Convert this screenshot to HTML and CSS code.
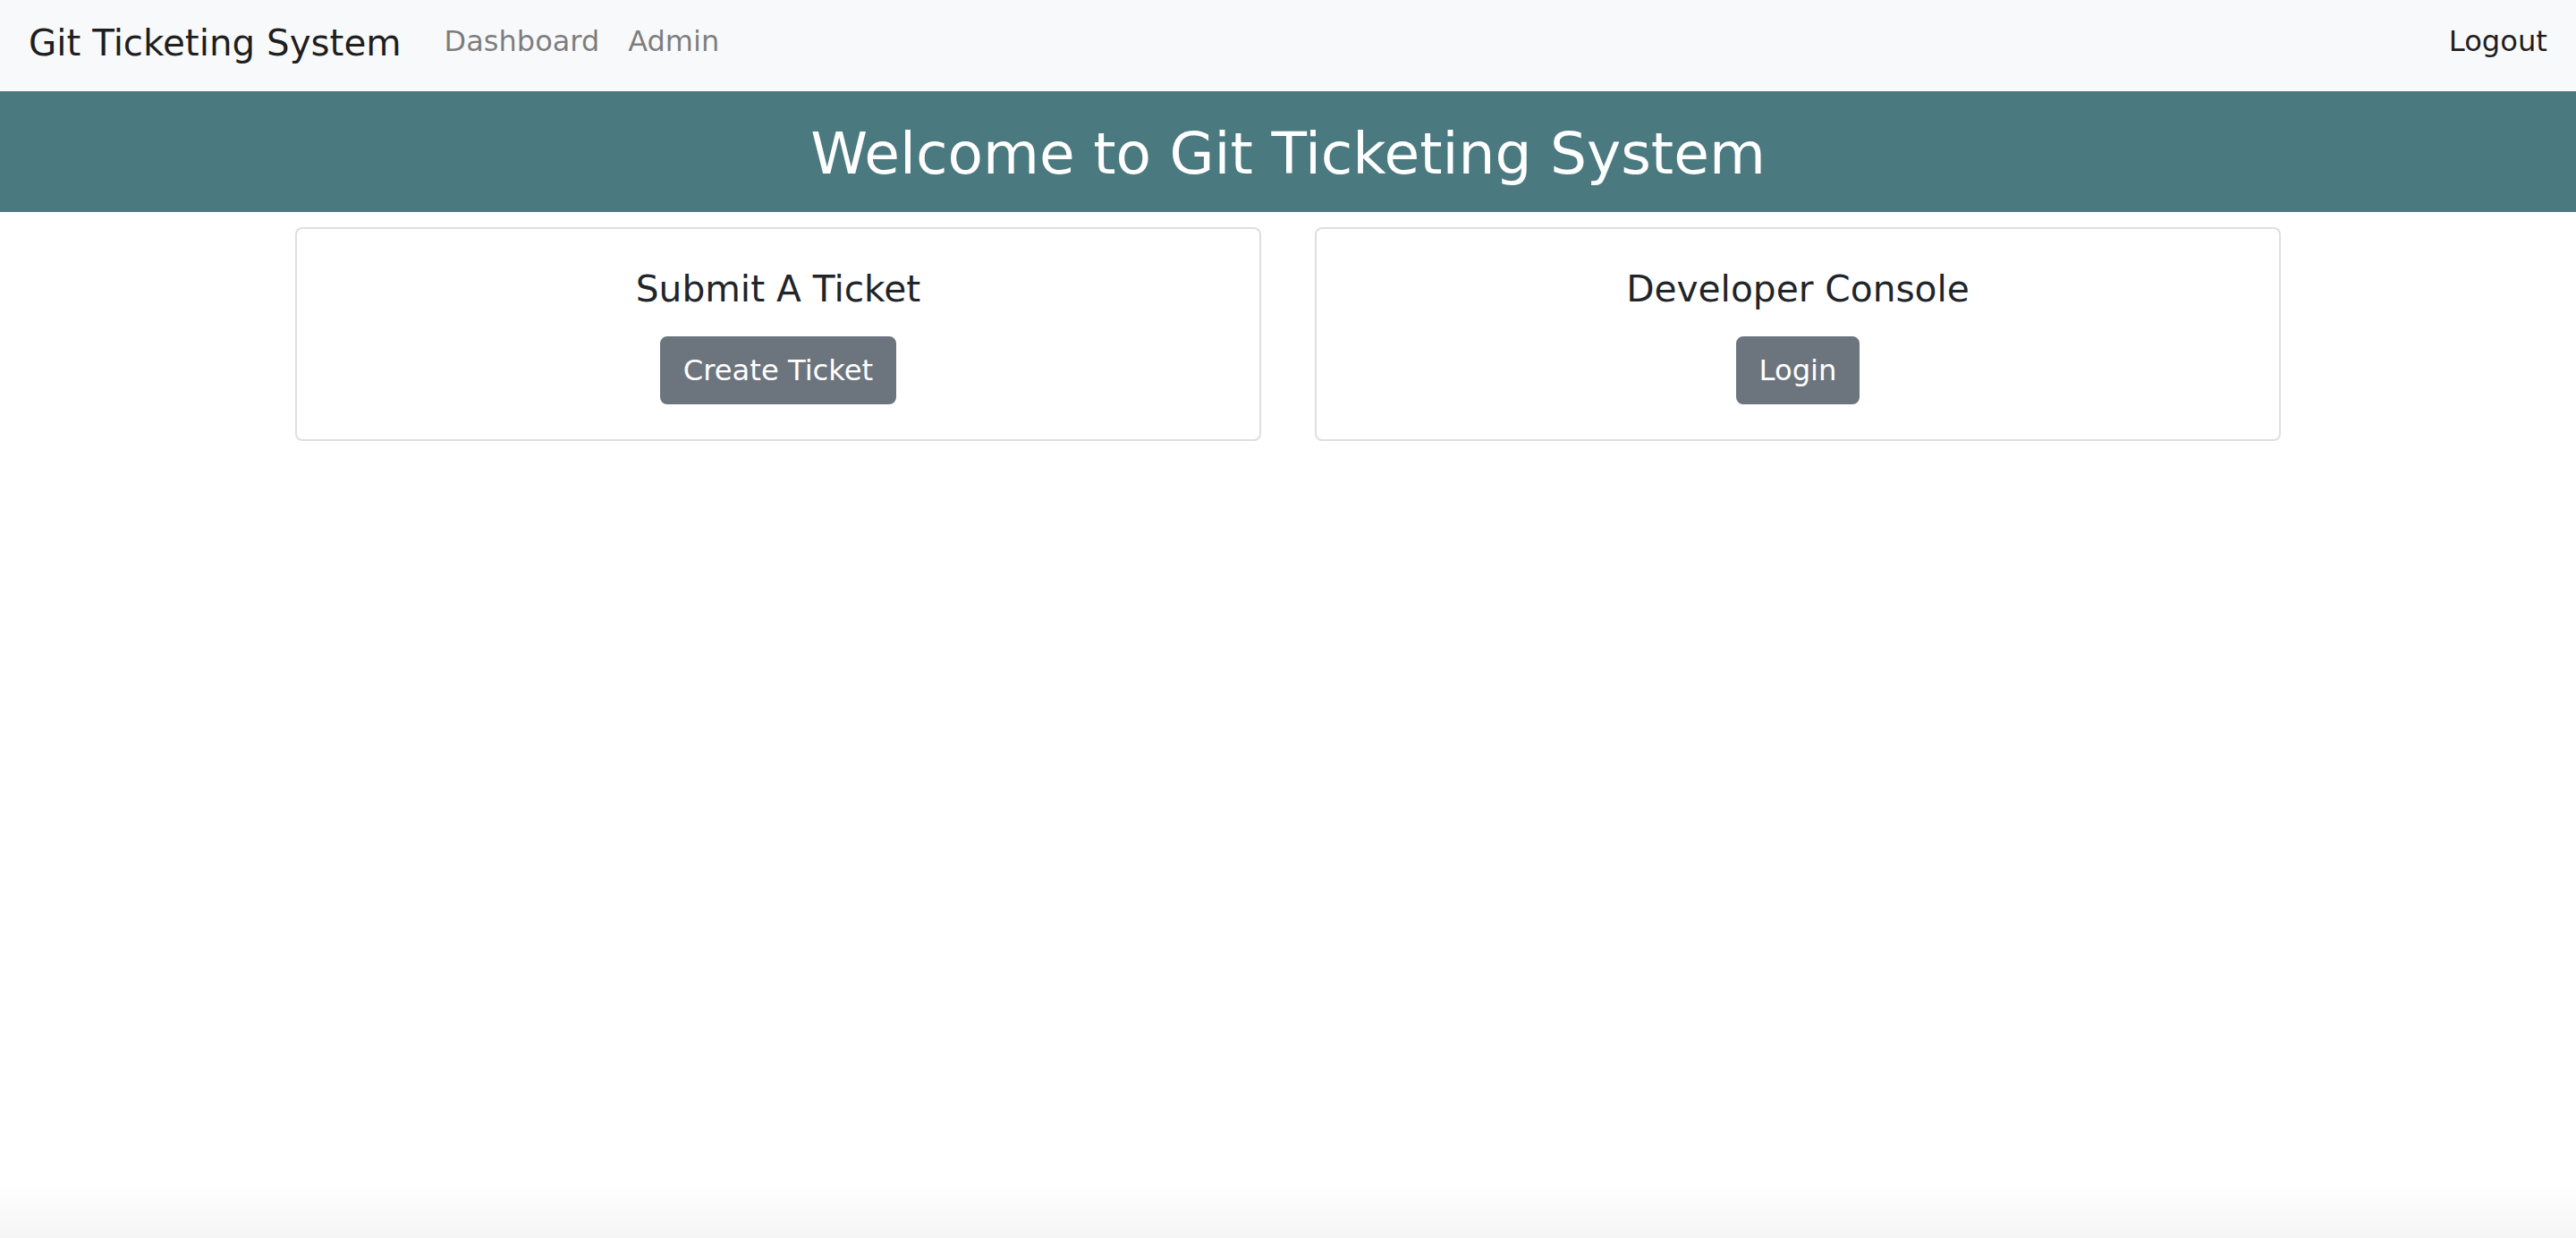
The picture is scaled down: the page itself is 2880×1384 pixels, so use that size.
FILE: index.html
```html
<!DOCTYPE html>
<html lang="en">
<head>
<meta charset="utf-8">
<title>Git Ticketing System</title>
<link rel="stylesheet" href="styles.css">
</head>
<body>
<nav class="navbar">
  <a class="brand" href="#">Git Ticketing System</a>
  <div class="nav">
    <a class="nav-link" href="#">Dashboard</a>
    <a class="nav-link" href="#">Admin</a>
  </div>
  <a class="logout" href="#">Logout</a>
</nav>
<header class="banner">
  <h1 class="banner-title">Welcome to Git Ticketing System</h1>
</header>
<main class="container">
  <section class="card">
    <h5 class="card-title">Submit A Ticket</h5>
    <a class="btn" href="#">Create Ticket</a>
  </section>
  <section class="card">
    <h5 class="card-title">Developer Console</h5>
    <a class="btn" href="#">Login</a>
  </section>
</main>
</body>
</html>
```

FILE: styles.css
```css
html {
  min-height: 100%;
  background: linear-gradient(#ffffff calc(100% - 60px), #f5f5f5);
}
body {
  margin: 0;
  min-height: 1384px;
  font-family: "DejaVu Sans", sans-serif;
  color: #212529;
}
a { text-decoration: none; }

.navbar {
  display: flex;
  align-items: flex-start;
  height: 102px;
  box-sizing: border-box;
  padding: 0 32px;
  background: #f8f9fa;
}
.brand {
  font-size: 40.4px;
  line-height: 60px;
  margin-top: 18px;
  margin-right: 32px;
  color: rgba(0, 0, 0, 0.9);
}
.nav {
  display: flex;
  margin-top: 22px;
}
.nav-link {
  font-size: 32px;
  line-height: 48px;
  padding: 0 16px;
  color: rgba(0, 0, 0, 0.5);
}
.logout {
  margin-left: auto;
  margin-top: 22px;
  font-size: 32.2px;
  line-height: 48px;
  color: rgba(0, 0, 0, 0.9);
}

.banner {
  background: #4a797f;
  color: #fff;
  text-align: center;
  padding: 31px 0 27px;
}
.banner-title {
  margin: 0;
  font-size: 64.6px;
  line-height: 77px;
  font-weight: 400;
}

.container {
  width: 2280px;
  margin: 17px auto 0;
  padding: 0 30px;
  box-sizing: border-box;
  display: grid;
  grid-template-columns: 1fr 1fr;
  column-gap: 60px;
}
.card {
  border: 2px solid rgba(0, 0, 0, 0.125);
  border-radius: 8px;
  padding: 40px 40px 39px;
  text-align: center;
  background: #fff;
}
.card-title {
  margin: 3px 0 29px;
  font-size: 40.7px;
  line-height: 48px;
  font-weight: 400;
  color: #212529;
}
.btn {
  display: inline-block;
  font-size: 32.2px;
  line-height: 48px;
  padding: 12px 24px;
  color: #fff;
  background: #6c757d;
  border: 2px solid #6c757d;
  border-radius: 8px;
}
```
